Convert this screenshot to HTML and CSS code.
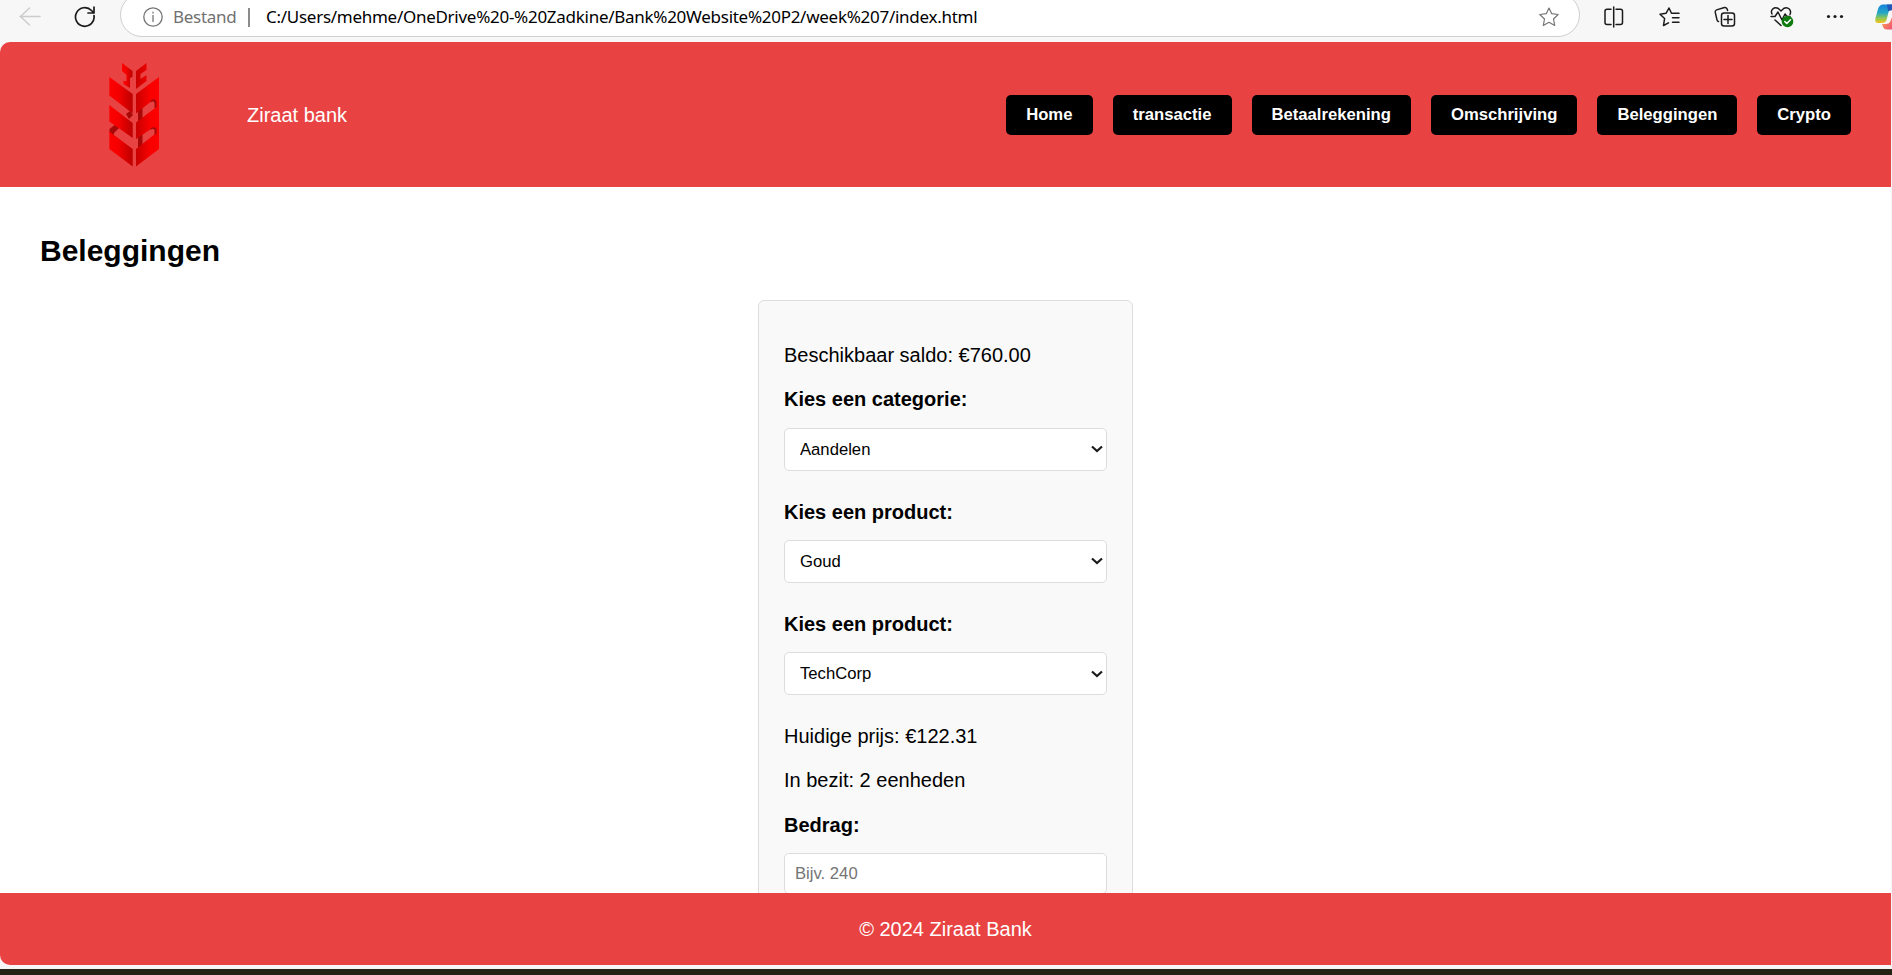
FILE: index.html
```html
<!DOCTYPE html>
<html lang="nl">
<head>
<meta charset="utf-8">
<title>Ziraat bank</title>
<link rel="stylesheet" href="styles.css">
</head>
<body>
<div class="browser">
  <div class="toolbar">
    <svg class="back" width="22" height="20" viewBox="0 0 22 20"><path d="M1 9.500H21M10.500 1L1.500 9.500L10.500 18"/></svg>
    <svg class="reload" width="22" height="22" viewBox="0 0 22 22"><path d="M20 9.500A9.300 9.300 0 1 1 17.500 4.500L20 7M20 1V7H14"/></svg>
    <div class="address">
      <svg class="info" width="20" height="20" viewBox="0 0 20 20"><circle cx="10" cy="10" r="9.200"/><path d="M10 8.500V14.500M10 5.200V6"/></svg>
      <span class="scheme">Bestand</span>
      <span class="divider"></span>
      <span class="url">C:/Users/mehme/OneDrive%20-%20Zadkine/Bank%20Website%20P2/week%207/index.html</span>
      <svg class="star" width="20" height="20" viewBox="0 0 20 20"><path d="M10 1L12.700 6.700L19.200 7.500L14.500 12L15.700 18.500L10 15.300L4.300 18.500L5.500 12L.8 7.500L7.300 6.700Z"/></svg>
    </div>
    <div class="tools">
      <svg width="22" height="22" viewBox="0 0 22 22"><path d="M8 3.200H4Q2 3.200 2 5.200V16.500Q2 18.500 4 18.500H8M13 3.200H17.500Q19.500 3.200 19.500 5.200V16.500Q19.500 18.500 17.500 18.500H13M10.700 1V21"/></svg>
      <svg width="22" height="22" viewBox="0 0 22 22"><path d="M12.500 7.200L10 2L7 7.300L1 8.200L5.600 12.500L4.500 19.500L9.500 16.800M13.500 7.200H20M13.500 11.700H20M13.500 16.200H20"/></svg>
      <svg width="22" height="22" viewBox="0 0 22 22"><path d="M4.500 15.500Q3.300 15.200 3 13.800L1.200 6.200Q1 4.500 2.600 3.900L10.500 1.500Q12.300 1.200 13 2.800L13.600 4.500M10 7H18Q20.500 7 20.500 9.500V17.500Q20.500 20 18 20H10Q7.500 20 7.500 17.500V9.500Q7.500 7 10 7ZM14 9.500V17.500M10 13.500H18"/></svg>
      <svg class="health" width="25" height="22" viewBox="0 0 25 22"><path d="M2 8C0 4 4 .5 8 2.200L11 5L14 2.200C18 .5 22 4 20 8.500M1 10.500H5L8 6L12 14L15 8L17 10.500H20M5 14L11 19.500"/><circle class="check-disc" cx="17.500" cy="15.500" r="5.800"/><path class="check" d="M14.800 15.500L16.800 17.500L20.500 13.700"/></svg>
      <svg width="22" height="22" viewBox="0 0 22 22"><g class="dots"><circle cx="4.500" cy="10.500" r="1.600"/><circle cx="11" cy="10.500" r="1.600"/><circle cx="17.500" cy="10.500" r="1.600"/></g></svg>
      <svg class="copilot" width="18" height="26" viewBox="0 0 18 26">
        <defs>
          <linearGradient id="cp1" x1="0" y1="0" x2="0" y2="1"><stop offset="0" stop-color="#1681dc"/><stop offset=".45" stop-color="#24a8c4"/><stop offset=".75" stop-color="#94c850"/><stop offset="1" stop-color="#f5c21d"/></linearGradient>
          <linearGradient id="cp2" x1="0" y1="0" x2="1" y2="1"><stop offset="0" stop-color="#ffb04b"/><stop offset="1" stop-color="#ed4b75"/></linearGradient>
        </defs>
        <path fill="url(#cp1)" d="M8 .5H18V5Q14 5 13 10L11.500 16Q10.500 19 7 19H3Q-.5 19 .5 14L3 5Q4.500 .5 8 .5Z"/>
        <path fill="#2257b8" d="M12 .5H18V6L13 7Z"/>
        <path fill="url(#cp2)" d="M18 11L15 18Q14 20 11 20H7L8 23Q9 25.500 12 25.500H18Z"/>
      </svg>
    </div>
  </div>
  <div class="page">
    <header class="header">
      <svg class="logo" width="50" height="104" viewBox="0 0 50 104">
        <defs>
          <linearGradient id="left"><stop offset="0" stop-color="#f00"/><stop offset=".4" stop-color="#f40000"/><stop offset="1" stop-color="#bc0000"/></linearGradient>
          <linearGradient id="right" gradientUnits="userSpaceOnUse" x1="27" y1="0" x2="50" y2="0"><stop offset="0" stop-color="#c80000"/><stop offset=".6" stop-color="#f80000"/><stop offset="1" stop-color="#f00"/></linearGradient>
        </defs>
        <g fill="#a80808">
          <path d="M17 51L21 48L24 52L20 56Z"/>
          <path d="M8 60L12 63L5 70V73L.5 70V66Z"/>
          <path d="M29 44H33.500V60H29ZM29 68H33.500V84H29Z"/>
        </g>
        <g fill="url(#left)">
          <path d="M13 0L23.500 8V14L21 15V25L14.500 21V18L17.500 18V12L13 8Z"/>
          <path d="M.3 14L23.700 31V50.500L.3 32.500Z"/>
          <path d="M.3 42L23.700 60V75L.3 58.500Z"/>
          <path d="M.3 68.500L23.700 86V103.500L.3 86Z"/>
        </g>
        <g fill="url(#right)">
          <path d="M37.500 0V7L31.500 11V16L37.500 12V18L27 26V8Z"/>
          <path fill-rule="evenodd" d="M50 14V86L27 103.500V86L46 71V67Q45 64.500 42 66L27 76V59.500L46 45V39.500Q45 36.500 42 38.500L27 50.500V31Z"/>
        </g>
        <path fill="#a80808" d="M42 37Q46 35 47.500 38V44L45.500 45V40Q45 37.500 41 39.500ZM42 65Q46 63 47.500 66V71L45.500 72V67.500Q45 65 41 67Z"/>
      </svg>
      <span class="brand">Ziraat bank</span>
      <nav class="nav">
        <button>Home</button><button>transactie</button><button>Betaalrekening</button><button>Omschrijving</button><button>Beleggingen</button><button>Crypto</button>
      </nav>
    </header>
    <main class="main">
      <h2>Beleggingen</h2>
      <section class="card">
        <p>Beschikbaar saldo: €760.00</p>
        <label>Kies een categorie:</label>
        <div class="field"><select><option>Aandelen</option></select><svg width="12" height="8" viewBox="0 0 12 8"><path d="M1 1.500L6 6L11 1.500"/></svg></div>
        <label>Kies een product:</label>
        <div class="field"><select><option>Goud</option></select><svg width="12" height="8" viewBox="0 0 12 8"><path d="M1 1.500L6 6L11 1.500"/></svg></div>
        <label>Kies een product:</label>
        <div class="field"><select><option>TechCorp</option></select><svg width="12" height="8" viewBox="0 0 12 8"><path d="M1 1.500L6 6L11 1.500"/></svg></div>
        <p>Huidige prijs: €122.31</p>
        <p>In bezit: 2 eenheden</p>
        <label>Bedrag:</label>
        <input type="text" placeholder="Bijv. 240">
      </section>
    </main>
    <footer class="footer">© 2024 Ziraat Bank</footer>
  </div>
  <div class="desktop"></div>
</div>
</body>
</html>
```
FILE: styles.css
```css
* { box-sizing: border-box; }
body { margin: 0; }
.browser {
  height: 975px;
  display: flex;
  flex-direction: column;
  overflow: hidden;
  background: #f7f7f7;
  font-family: "Liberation Sans", Arial, sans-serif;
  font-size: 20px;
  line-height: 23px;
  color: #000;
}
svg { flex: none; fill: none; stroke: #1b1b1b; stroke-width: 1.5; stroke-linejoin: round; stroke-linecap: round; }
.toolbar { height: 42px; flex: none; display: flex; align-items: flex-start; }
.back { margin: 7px 0 0 19px; stroke: #ccc; }
.reload { margin: 6px 0 0 33px; stroke-width: 1.7; }
.address {
  width: 1460px;
  height: 44px;
  flex: none;
  margin: -7px 0 0 24px;
  padding: 4px 20px 0 22px;
  display: flex;
  align-items: center;
  background: #fff;
  border: 1px solid #cfcfcf;
  border-radius: 22px;
  font-family: "Noto Sans", sans-serif;
  font-size: 17px;
  white-space: nowrap;
}
.info { stroke: #767676; stroke-width: 1.3; }
.scheme { width: 62px; margin-left: 10px; padding-bottom: 1px; color: #707070; letter-spacing: -0.3px; }
.divider { width: 2px; height: 19px; margin-left: 13px; background: #8c8c8c; }
.url { margin-left: 16px; padding-bottom: 2px; letter-spacing: -0.275px; }
.star { margin-left: auto; stroke: #767676; stroke-width: 1.2; }
.tools { display: flex; align-items: flex-start; padding: 6px 0 0 23px; gap: 33.500px; }
.health { margin-right: -4px; }
.check-disc { fill: #107c10; stroke: none; }
.check { stroke: #fff; }
.dots { fill: #1b1b1b; stroke: none; }
.copilot { margin: -2px 0 0 -5px; stroke: none; }
.page {
  height: 923px;
  flex: none;
  margin-right: 1px;
  display: flex;
  flex-direction: column;
  overflow: hidden;
  background: #fff;
  border-radius: 10px 0 0 10px;
}
.header {
  height: 145px;
  flex: none;
  display: flex;
  align-items: center;
  padding: 0 40px 0 109px;
  background: #e84342;
  color: #fff;
}
.logo { stroke: none; }
.brand { margin-left: 88px; padding-top: 1px; }
.nav { display: flex; gap: 20px; margin-left: auto; }
.nav button {
  height: 40px;
  padding: 0 20px;
  border: 0;
  border-radius: 5px;
  background: #000;
  color: #fff;
  font: bold 16.667px "Liberation Sans", Arial, sans-serif;
}
.nav button:first-child { width: 87px; }
.main { flex: 1; min-height: 0; padding: 0 40px; overflow: hidden; }
.main h2 { margin: 46px 0 32px; font-size: 30px; line-height: 35px; }
.card {
  width: 375px;
  margin: 0 auto;
  padding: 43px 25px 25px;
  background: #f9f9f9;
  border: 1px solid #ddd;
  border-radius: 6px;
}
.card p { margin: 0 0 21.25px; }
.card label { display: block; margin-bottom: 16.5px; font-weight: bold; }
.field { display: grid; align-items: center; margin-bottom: 30px; }
.field select, .field svg { grid-area: 1 / 1; }
.field svg { justify-self: end; margin-right: 4.500px; stroke-width: 2.2; stroke-linejoin: miter; stroke-linecap: butt; pointer-events: none; }
.card select, .card input {
  display: block;
  width: 323px;
  height: 42.75px;
  padding: 0 15px;
  appearance: none;
  background-color: #fff;
  border: 1px solid #ddd;
  border-radius: 5px;
  font: 16.667px "Liberation Sans", Arial, sans-serif;
  color: #000;
}
.card input { height: 41px; padding: 0 10px; }
.card input::placeholder { color: #757575; }
.footer {
  height: 72px;
  flex: none;
  display: flex;
  align-items: center;
  justify-content: center;
  background: #e84342;
  color: #fff;
}
.desktop { height: 6px; margin-top: auto; background: #242415; }
```
